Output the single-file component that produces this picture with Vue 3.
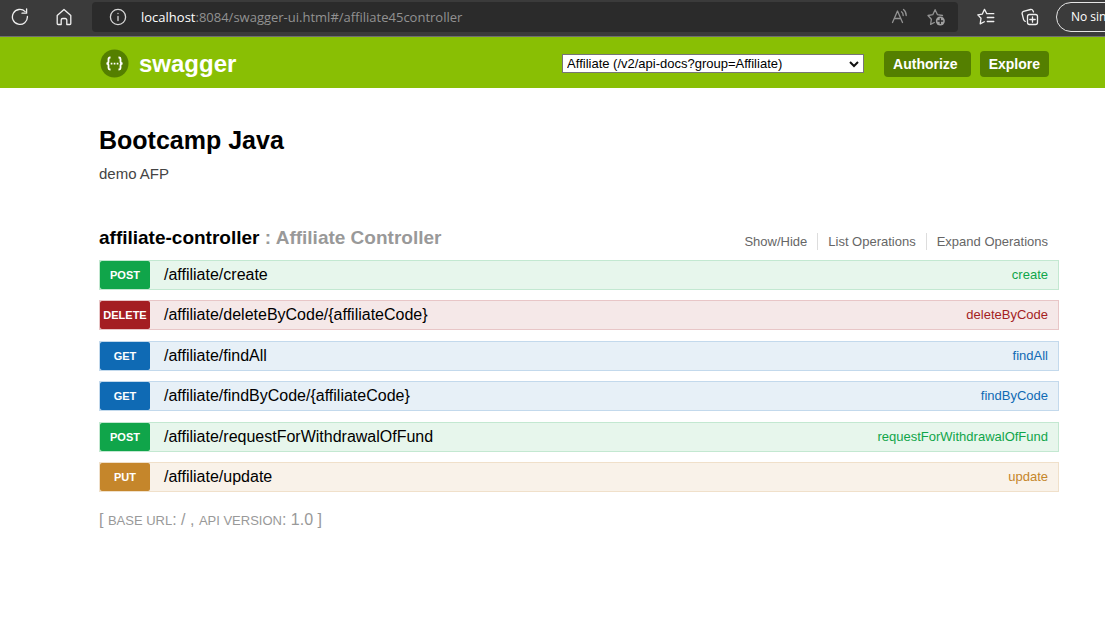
<script setup>
import { ref } from 'vue'

const group = ref('Affiliate')

const operations = [
  { method: 'post', path: '/affiliate/create', name: 'create' },
  { method: 'delete', path: '/affiliate/deleteByCode/{affiliateCode}', name: 'deleteByCode' },
  { method: 'get', path: '/affiliate/findAll', name: 'findAll' },
  { method: 'get', path: '/affiliate/findByCode/{affiliateCode}', name: 'findByCode' },
  { method: 'post', path: '/affiliate/requestForWithdrawalOfFund', name: 'requestForWithdrawalOfFund' },
  { method: 'put', path: '/affiliate/update', name: 'update' }
]
</script>

<template>
  <div class="page">
    <div class="browser">
      <button class="tool" type="button" aria-label="Refresh">
        <svg width="18" height="18" viewBox="0 0 18 18">
          <path d="M16.400 8.500A7.500 7.500 0 1 1 14.200 3.600" />
          <path d="M15.600 .8v4.400h-4.600" />
        </svg>
      </button>
      <button class="tool" type="button" aria-label="Home">
        <svg width="16" height="18" viewBox="0 0 16 18">
          <path d="M1.2 7.4 8 1.4l6.800 6v8.200a.9.9 0 0 1-.9.9h-3.100v-4.400a1.600 1.600 0 0 0-1.600-1.600H6.800a1.600 1.600 0 0 0-1.600 1.600v4.400H2.100a.9.9 0 0 1-.9-.9z" />
        </svg>
      </button>
      <div class="address">
        <svg class="info" width="18" height="18" viewBox="0 0 18 18">
          <circle cx="9" cy="9" r="7.600" />
          <path d="M9 8.500v4M9 5.400v.2" />
        </svg>
        <a class="url" href="#/affiliate45controller"><span class="host">localhost</span>:8084/swagger-ui.html#/affiliate45controller</a>
        <button class="tool dim" type="button" aria-label="Read aloud">
          <svg width="18" height="18" viewBox="0 0 18 18">
            <path d="M1.500 14.500 6.500 3l5 11.500M3.300 10.500h6.400" />
            <path d="M10.500 3.800q1.700 1.300 1.700 3.700M12.500 1.500q2.700 2.200 2.700 6" />
          </svg>
        </button>
        <button class="tool dim star" type="button" aria-label="Add to favorites">
          <svg width="18" height="18" viewBox="0 0 18 18">
            <path d="M7.300 14.500l-3.700 1.900.8-5.200L1 7.500l4.800-.8 2.300-5 2.400 5 5 .8" />
            <circle class="solid" cx="13.300" cy="13" r="4.500" />
            <path class="cut" d="M13.300 10.600v4.800M10.900 13h4.800" />
          </svg>
        </button>
      </div>
      <button class="tool fav" type="button" aria-label="Favorites">
        <svg width="18" height="18" viewBox="0 0 18 18">
          <path d="M10.500 5.700H9.800L7.500 1.400 5.200 6.200.8 6.900 4 10.300l-.8 5.600 4.100-2.200M11.500 5.700h5.300M10.300 9.500h6.500M10.300 13.500h6.500" />
        </svg>
      </button>
      <button class="tool coll" type="button" aria-label="Collections">
        <svg width="18" height="18" viewBox="0 0 18 18">
          <path d="M4.200 13.400Q3 12.900 2.600 11.600L1.200 6Q.7 4 2.500 3.300L9.500 1.500Q11.300 1.100 12 2.700L12.500 4" />
          <rect x="6.500" y="6.500" width="10" height="10" rx="2" />
          <path d="M11.500 8.800v5.400M8.800 11.500h5.400" />
        </svg>
      </button>
      <button class="profile" type="button">No sin</button>
    </div>

    <header class="header">
      <a class="logo" href="#">
        <svg width="29" height="29" viewBox="0 0 29 29">
          <circle cx="14.500" cy="14.500" r="14" />
          <path d="M10.500 8.500H10Q8.500 8.500 8.500 10v2.500q0 1.800-2 2 2 .2 2 2v2.500q0 1.500 1.500 1.500h.5M18.500 8.500h.5q1.500 0 1.500 1.500v2.500q0 1.800 2 2-2 .2-2 2v2.500q0 1.500-1.500 1.500h-.5" />
          <path class="dots" d="M10.700 13.700h1.700v1.700h-1.700zM13.700 13.700h1.700v1.700h-1.700zM16.700 13.700h1.700v1.700h-1.700z" />
        </svg>
        <span>swagger</span>
      </a>
      <form class="selector" @submit.prevent>
        <div class="picker">
          <select v-model="group" aria-label="API group">
            <option value="Affiliate">Affiliate (/v2/api-docs?group=Affiliate)</option>
          </select>
          <svg width="10" height="8" viewBox="0 0 10 8"><path d="M1 2l4 4 4-4" /></svg>
        </div>
        <button class="authorize" type="button">Authorize</button>
        <button class="explore" type="submit">Explore</button>
      </form>
    </header>

    <main class="content">
      <h1>Bootcamp Java</h1>
      <p class="description">demo AFP</p>

      <section>
        <div class="heading">
          <h2><a class="resource" href="#/affiliate45controller">affiliate-controller</a> : Affiliate Controller</h2>
          <nav class="options">
            <a href="#show">Show/Hide</a>
            <a href="#list">List Operations</a>
            <a href="#expand">Expand Operations</a>
          </nav>
        </div>
        <ul class="operations">
          <li v-for="op in operations" :key="op.name" :class="['operation', op.method]">
            <a class="method" :href="'#' + op.name">{{ op.method }}</a>
            <a class="path" :href="'#' + op.name">{{ op.path }}</a>
            <a class="name" :href="'#' + op.name">{{ op.name }}</a>
          </li>
        </ul>
      </section>

      <footer>[ <span>base url</span>: / , <span>api version</span>: 1.0 ]</footer>
    </main>
  </div>
</template>

<style>
body {
  margin: 0;
  background: #fff;
}
</style>

<style scoped>
.page {
  font-family: "Liberation Sans", Arial, sans-serif;
  color: #000;
  overflow: hidden;
}
a {
  color: inherit;
  text-decoration: none;
}
button {
  font-family: inherit;
  border: 0;
  padding: 0;
  cursor: pointer;
}
.browser {
  display: flex;
  align-items: center;
  box-sizing: border-box;
  height: 37px;
  padding: 0 0 3px 11px;
  background: #3b3b3b;
  border-bottom: 1px solid #707070;
}
.tool {
  display: flex;
  flex: none;
  width: 18px;
  margin-right: 26px;
  justify-content: center;
  background: none;
  color: #f0f0f0;
}
.tool svg,
.info {
  fill: none;
  stroke: currentColor;
  stroke-width: 1.3;
  stroke-linecap: round;
  stroke-linejoin: round;
}
.tool + .address {
  margin-left: -7px;
}
.address {
  flex: 1;
  display: flex;
  align-items: center;
  box-sizing: border-box;
  height: 30px;
  padding: 0 13px 0 17px;
  border-radius: 4px;
  background: #2b2b2b;
  color: #929292;
}
.info {
  flex: none;
  color: #d6d6d6;
}
.url {
  flex: 1;
  margin-left: 14px;
  font: 13px/20px "Open Sans", sans-serif;
  white-space: nowrap;
}
.host {
  color: #fff;
}
.dim {
  margin-right: 18px;
  color: #929292;
}
.dim.star {
  margin-right: 0;
}
.tool .solid {
  fill: #a0a0a0;
  stroke: none;
}
.tool .cut {
  stroke: #2b2b2b;
}
.fav {
  margin-left: 19px;
}
.coll {
  margin-right: 17px;
}
.profile {
  box-sizing: border-box;
  flex: none;
  width: 130px;
  height: 30px;
  margin-right: -81px;
  padding-left: 14px;
  border: 1px solid #e5e5e5;
  border-radius: 15px;
  background: none;
  color: #fff;
  font: 12px "Open Sans", sans-serif;
  text-align: left;
  white-space: nowrap;
}
.header {
  display: flex;
  align-items: center;
  justify-content: space-between;
  box-sizing: border-box;
  height: 51px;
  padding: 2px 56px 0 100px;
  background: #89bf04;
}
.logo {
  display: flex;
  align-items: center;
  gap: 10px;
  color: #fff;
  font-size: 24px;
  font-weight: bold;
}
.logo circle {
  fill: #547f00;
}
.logo path {
  fill: none;
  stroke: #fff;
  stroke-width: 1.8;
}
.logo .dots {
  fill: #fff;
  stroke: none;
}
.selector {
  display: flex;
  align-items: center;
}
.picker {
  position: relative;
  width: 302px;
  margin-right: 20px;
}
.picker select {
  display: block;
  appearance: none;
  width: 100%;
  height: 19px;
  padding: 0 20px 0 4px;
  border: 1px solid #767676;
  border-radius: 0;
  background: #fff;
  color: #000;
  font: 13px "Liberation Sans", Arial, sans-serif;
}
.picker svg {
  position: absolute;
  top: 6px;
  right: 5px;
  fill: none;
  stroke: #111;
  stroke-width: 2;
  pointer-events: none;
}
.authorize,
.explore {
  height: 26px;
  padding: 0 9px;
  border-radius: 4px;
  background: #547f00;
  color: #fff;
  font-size: 14px;
  font-weight: bold;
}
.authorize {
  margin-right: 9px;
  padding-right: 13px;
}
.content {
  padding: 36px 46px 0 99px;
}
h1 {
  margin: 0;
  font-size: 25px;
  line-height: 32px;
}
.description {
  margin: 8px 0 44px;
  color: #444;
  font-size: 15px;
  line-height: 20px;
}
.heading {
  display: flex;
  align-items: center;
  justify-content: space-between;
  height: 32px;
  padding-right: 11px;
}
h2 {
  margin: 0;
  padding-bottom: 12px;
  color: #999;
  font-size: 19px;
  line-height: 20px;
}
.resource {
  color: #000;
}
.options {
  display: flex;
  padding-bottom: 6px;
  color: #666;
  font-size: 13px;
  line-height: 17px;
}
.options a + a {
  margin-left: 10px;
  padding-left: 10px;
  border-left: 1px solid #ddd;
}
.operations {
  display: grid;
  align-content: space-between;
  min-height: 232px;
  margin: 0;
  padding: 0;
  list-style: none;
}
.operation {
  display: flex;
  align-items: center;
  border: 1px solid;
}
.method {
  width: 50px;
  border-radius: 2px;
  color: #fff;
  font-size: 11px;
  font-weight: bold;
  line-height: 28px;
  text-align: center;
  text-transform: uppercase;
}
.path {
  flex: 1;
  padding-left: 14px;
  font-size: 16px;
  line-height: 26px;
}
.name {
  padding-right: 10px;
  font-size: 13px;
  line-height: 26px;
}
.post { background: #e7f6ec; border-color: #c3e8d1; }
.post .method { background: #10a54a; }
.post .name { color: #10a54a; }
.delete { background: #f5e8e8; border-color: #e8c6c7; }
.delete .method { background: #a41e22; }
.delete .name { color: #a41e22; }
.get { background: #e7f0f7; border-color: #c3d9ec; }
.get .method { background: #0f6ab4; }
.get .name { color: #0f6ab4; }
.put { background: #f9f2e9; border-color: #f0e0ca; }
.put .method { background: #c5862b; }
.put .name { color: #c5862b; }
footer {
  margin-top: 18px;
  color: #999;
  font-size: 16px;
  line-height: 20px;
}
footer span {
  font-size: 13px;
  text-transform: uppercase;
}
</style>
